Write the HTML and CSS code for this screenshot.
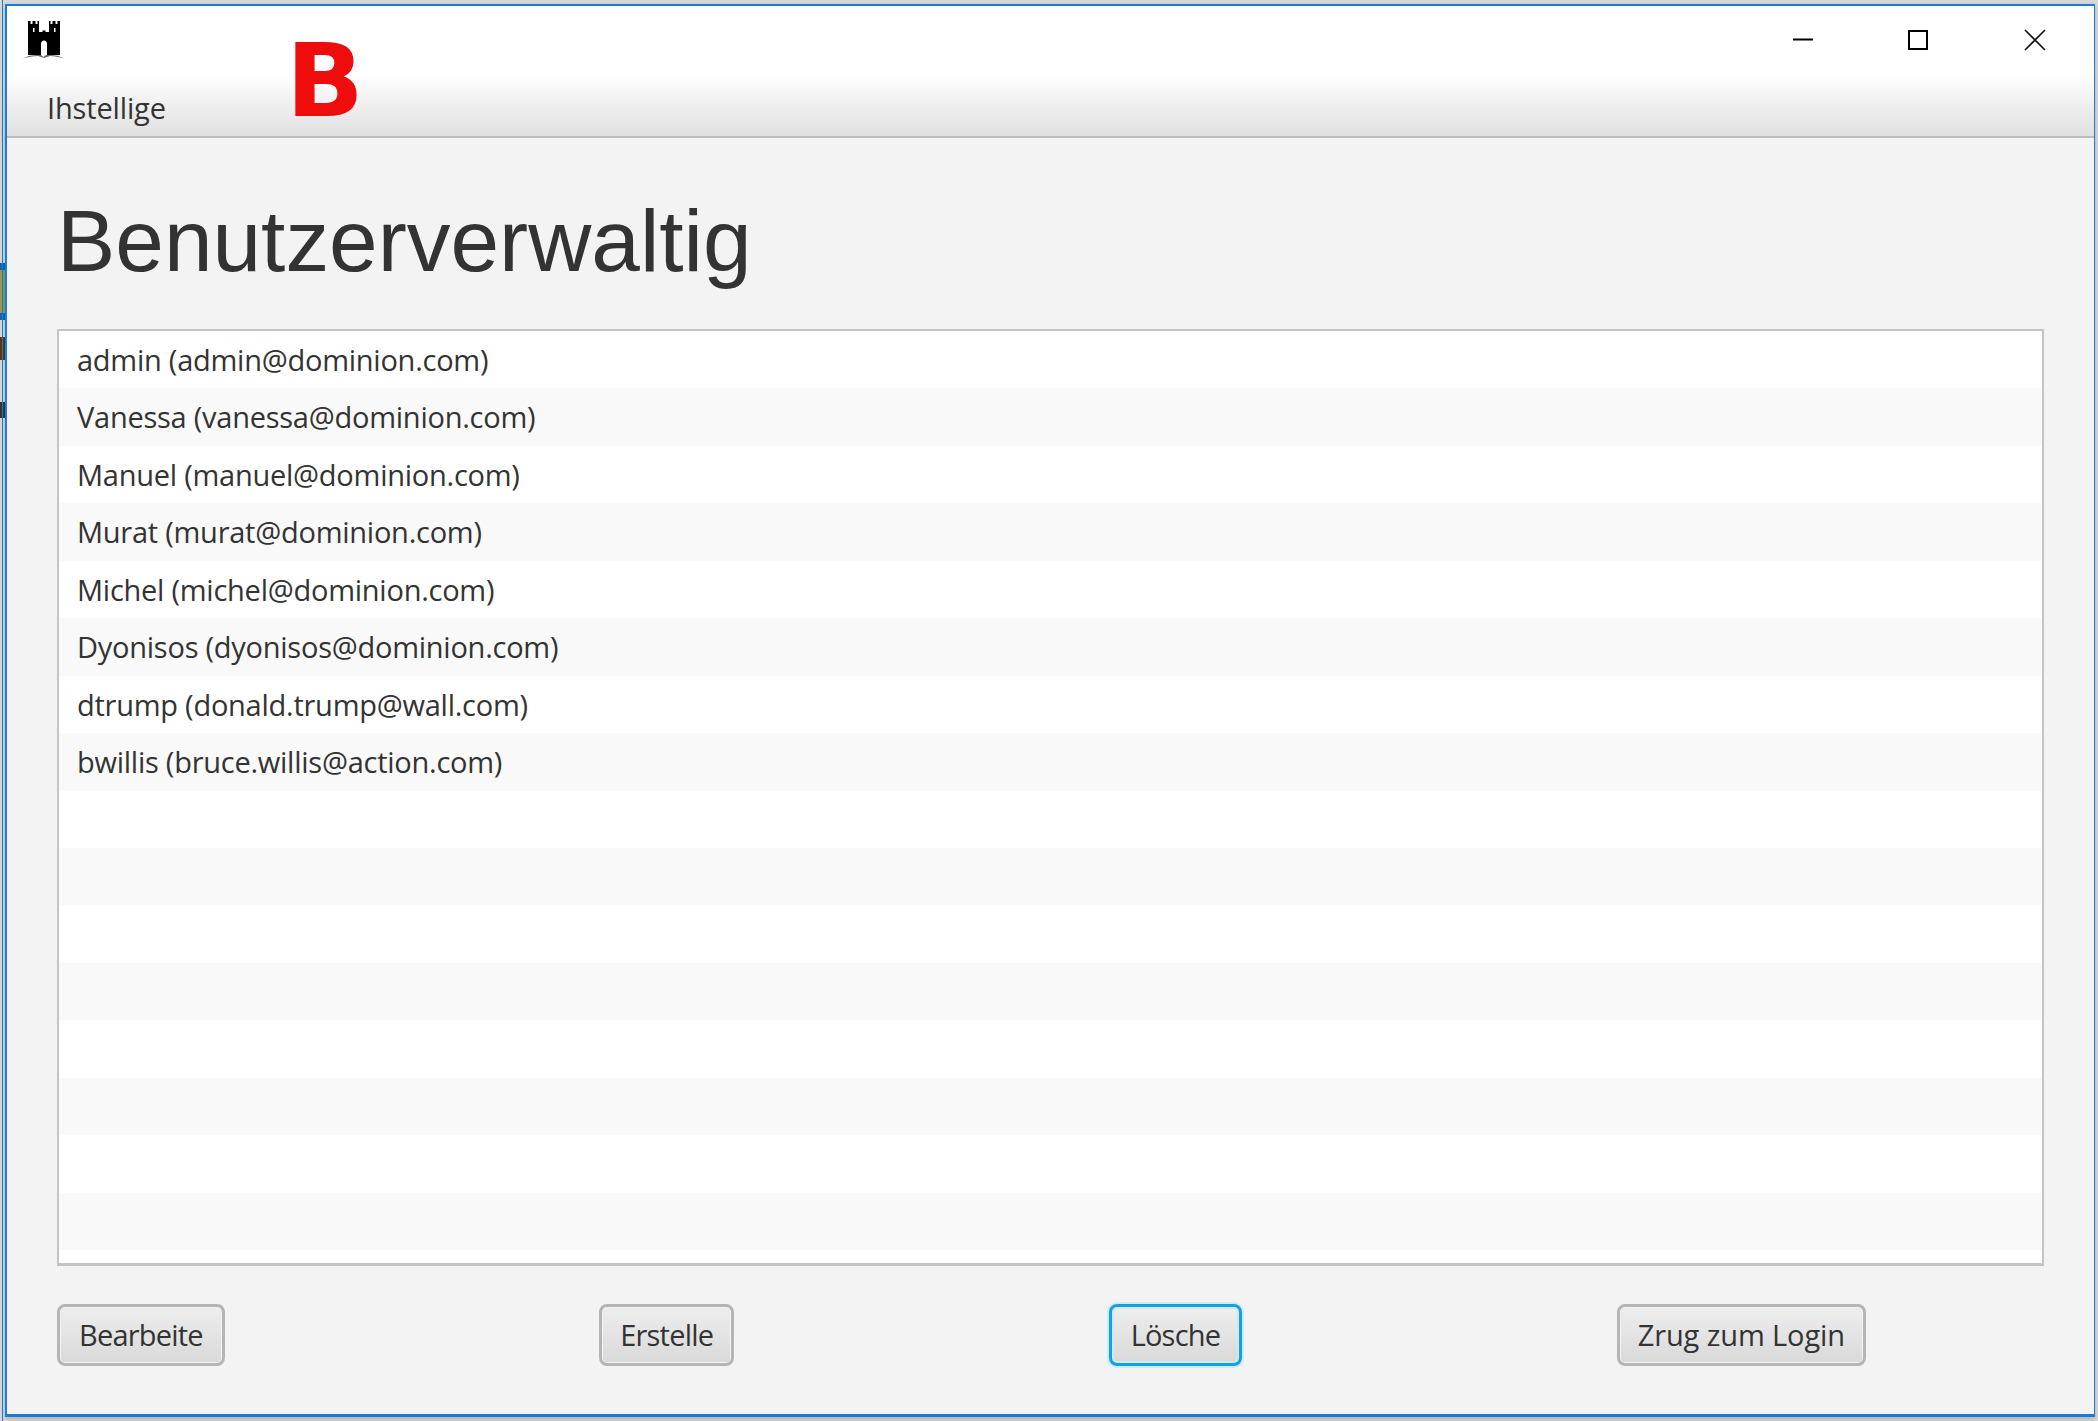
FILE: index.html
```html
<!DOCTYPE html>
<html lang="de">
<head>
    <meta charset="UTF-8">
    <meta name="viewport" content="width=device-width, initial-scale=1.0">
    <title>Benutzerverwaltig</title>
    <link rel="stylesheet" href="styles.css">
</head>
<body>
    <div class="window">
        <header class="header">
            <div class="titlebar">
                <svg class="app-icon" width="42" height="42" viewBox="0 0 42 42">
                    <path fill-rule="evenodd" fill="#000" d="M5 1h2.5v3h2V1h3v3h2V1H16v11h3.5v-1.5h3V12H26V1h1.500v3h2V1h3v3h2V1H37v34H24V24c0-2-1.300-3.500-3-3.500s-3 1.500-3 3.500v11H5zM10 8v4h1.500V8zM31 8v4h1.500V8z"/>
                    <path fill="#666" d="M0 38.500c4-2.500 9-3.500 15-3.500h3l2.500 2 2.500-2h3c6 0 11 1 15 3.500-5-1.500-10-2.500-14-2.500l-6 2-6-2c-5 0-10 1-15 2.500z"/>
                </svg>
                <div class="win-controls">
                    <svg class="win-btn win-btn-min" width="22" height="22" viewBox="0 0 22 22"><path d="M1 10.500h20" stroke="#000" stroke-width="2"/></svg>
                    <svg class="win-btn" width="22" height="22" viewBox="0 0 22 22"><rect x="2" y="2" width="18" height="18" fill="none" stroke="#000" stroke-width="2"/></svg>
                    <svg class="win-btn" width="22" height="22" viewBox="0 0 22 22"><path d="M1 1l20 20M21 1L1 21" stroke="#111" stroke-width="1.600"/></svg>
                </div>
            </div>
            <nav class="menubar">
                <span class="menu-item">Ihstellige</span>
            </nav>
        </header>
        <span class="marker">B</span>
        <main class="content">
            <h1 class="page-title">Benutzerverwaltig</h1>
            <ul class="user-list">
                <li>admin (admin@dominion.com)</li>
                <li>Vanessa (vanessa@dominion.com)</li>
                <li>Manuel (manuel@dominion.com)</li>
                <li>Murat (murat@dominion.com)</li>
                <li>Michel (michel@dominion.com)</li>
                <li>Dyonisos (dyonisos@dominion.com)</li>
                <li>dtrump (donald.trump@wall.com)</li>
                <li>bwillis (bruce.willis@action.com)</li>
                <li></li>
                <li></li>
                <li></li>
                <li></li>
                <li></li>
                <li></li>
                <li></li>
                <li></li>
            </ul>
            <div class="actions">
                <button class="btn btn-edit">Bearbeite</button>
                <button class="btn">Erstelle</button>
                <button class="btn btn-focus">Lösche</button>
                <button class="btn btn-login">Zrug zum Login</button>
            </div>
        </main>
    </div>
</body>
</html>
```

FILE: styles.css
```css
* {
    box-sizing: border-box;
}

html, body {
    height: 100%;
}

body {
    margin: 0;
    padding: 4px 3px 4px 5px;
    background-color: #d8d8d8;
    font-family: "Open Sans", "Noto Sans", sans-serif;
    color: #333;
    overflow: hidden;
}

/* bits of the desktop showing left of the window */
body::before {
    content: "";
    position: absolute;
    left: 0;
    top: 0;
    width: 5px;
    height: 100%;
    background:
        linear-gradient(to right, transparent 2px, #1a7fd4 2px, #1a7fd4 3px, transparent 3px),
        linear-gradient(transparent 263px, #1565b0 263px, #1565b0 270px, #9a9a50 270px, #9a9a50 313px, #1565b0 313px, #1565b0 320px, transparent 320px, transparent 337px, #5a3a10 337px, #5a3a10 360px, transparent 360px, transparent 402px, #333 402px, #333 418px, transparent 418px);
}

.window {
    position: relative;
    height: 1413px;
    background-color: #f3f3f3;
    border: 2px solid #1a7fd4;
    border-right-width: 1px;
    border-bottom-width: 3px;
    box-shadow: 0 2px 5px rgba(0, 0, 0, 0.2);
}

.header {
    height: 132px;
    border-bottom: 2px solid #bcbcbc;
    background: linear-gradient(#fff 0, #fff 69px, #f1f1f1 95px, #e0e0e0 130px);
}

.titlebar {
    display: flex;
    justify-content: space-between;
    height: 69px;
    padding: 14px 48px 0 16px;
}

.app-icon {
    display: block;
}

.win-controls {
    display: flex;
    gap: 95px;
    padding-top: 9px;
}

.win-btn {
    display: block;
}

.win-btn-min {
    margin-right: -2px;
}

.menubar {
    padding-left: 40px;
    line-height: 66px;
}

.menu-item {
    font-size: 29px;
    letter-spacing: -0.15px;
}

.marker {
    position: absolute;
    left: 279px;
    top: 15px;
    font-family: "DejaVu Sans", sans-serif;
    font-weight: bold;
    font-size: 102px;
    line-height: 120px;
    color: #ee0c0c;
}

.content {
    padding: 0 50px;
}

.page-title {
    margin: 0;
    height: 191px;
    padding-top: 53px;
    font-family: "Liberation Sans", sans-serif;
    font-weight: normal;
    font-size: 87.4px;
    line-height: 100px;
    color: #333;
}

.user-list {
    list-style: none;
    margin: 0;
    padding: 0;
    height: 937px;
    background-color: #fff;
    border: 2px solid #c4c4c4;
    border-bottom-width: 3px;
}

.user-list li {
    height: 57.44px;
    padding-left: 18px;
    font-size: 29px;
    letter-spacing: -0.25px;
    line-height: 58px;
}

.user-list li:nth-child(even) {
    background-color: #f9f9f9;
}

.actions {
    display: flex;
    justify-content: space-between;
    width: 1809px;
    margin-top: 38px;
}

.btn {
    height: 62px;
    padding: 0 18px 2px;
    font-family: inherit;
    font-size: 29px;
    letter-spacing: -0.8px;
    color: #333;
    border: 3px solid #b5b5b5;
    border-radius: 8px;
    background: linear-gradient(#eeeeee, #d9d9d9);
    box-shadow: inset 0 0 0 1px #f4f4f4;
}

.btn-edit {
    padding: 0 19px 2px;
}

.btn-login {
    letter-spacing: -0.1px;
}

.btn-focus {
    padding: 0 19px 2px;
    border-color: #0ea5dc;
    box-shadow: 0 0 0 2px #d3e9f1, inset 0 0 0 2px #d6e6ec;
}
```
